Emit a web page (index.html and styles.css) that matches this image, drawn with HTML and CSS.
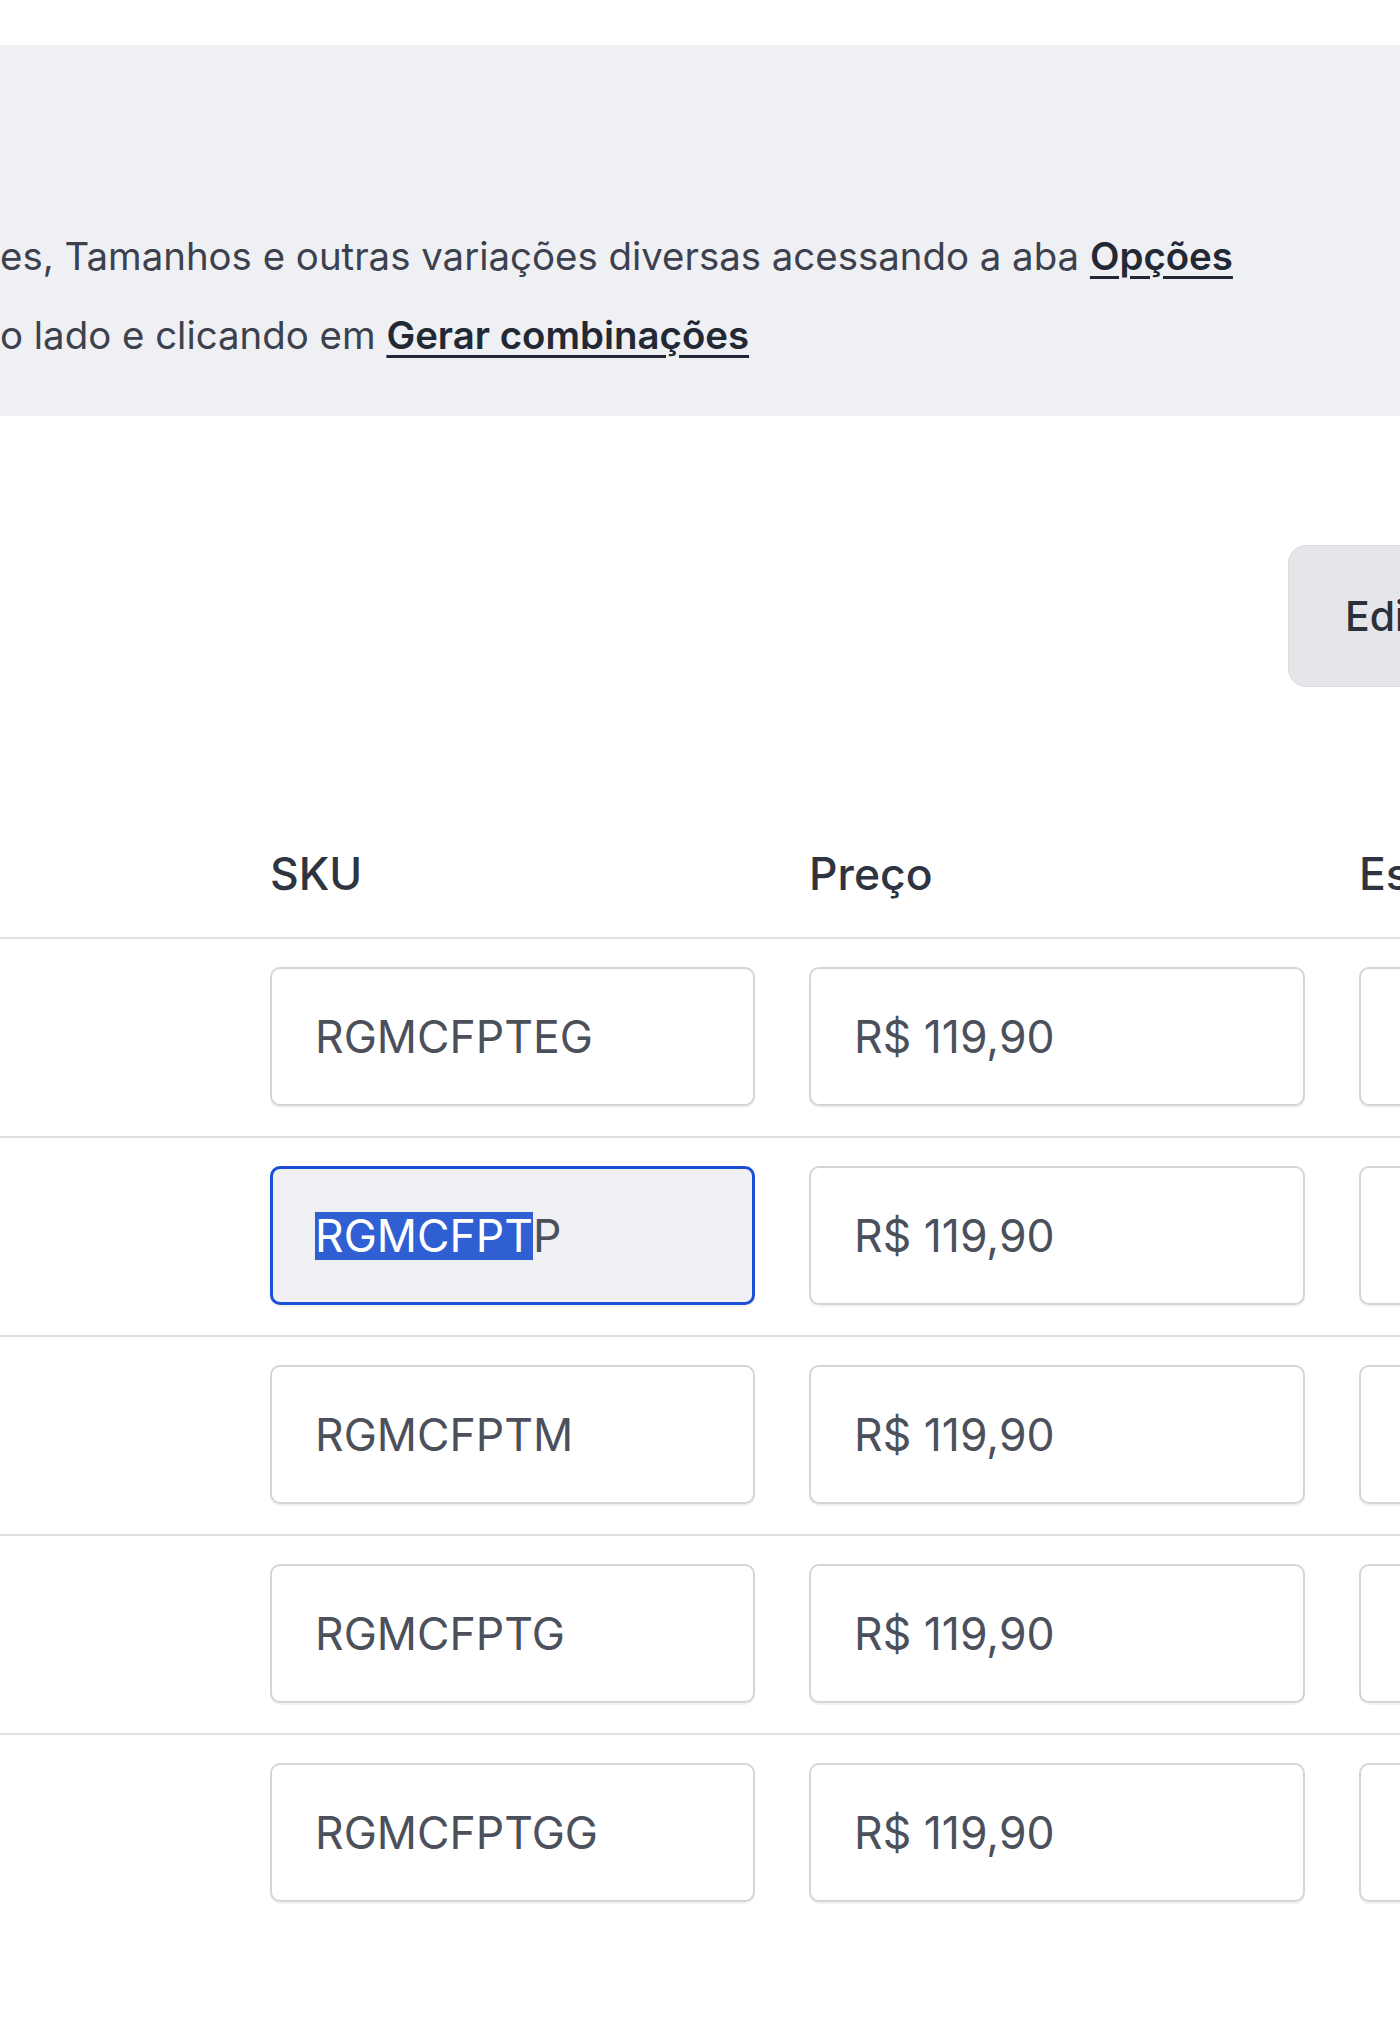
FILE: index.html
```html
<!DOCTYPE html>
<html lang="pt-BR">
<head>
<meta charset="utf-8">
<title>Variações</title>
<link rel="stylesheet" href="styles.css">
</head>
<body>
<div class="page">
  <section class="notice">
    <p class="notice-line">es, Tamanhos e outras variações diversas acessando a aba <a class="notice-link" href="#">Opções</a></p>
    <p class="notice-line">o lado e clicando em <a class="notice-link" href="#">Gerar combinações</a></p>
  </section>

  <div class="toolbar">
    <button class="btn" type="button">Editar em massa</button>
  </div>

  <div class="variants">
    <div class="row head">
      <div class="cell th">SKU</div>
      <div class="cell th">Preço</div>
      <div class="cell th">Estoque</div>
    </div>
    <div class="row">
      <div class="cell"><div class="field">RGMCFPTEG</div></div>
      <div class="cell"><div class="field">R$ 119,90</div></div>
      <div class="cell"><div class="field">10</div></div>
    </div>
    <div class="row">
      <div class="cell"><div class="field focused"><span class="sel">RGMCFPT</span>P</div></div>
      <div class="cell"><div class="field">R$ 119,90</div></div>
      <div class="cell"><div class="field">10</div></div>
    </div>
    <div class="row">
      <div class="cell"><div class="field">RGMCFPTM</div></div>
      <div class="cell"><div class="field">R$ 119,90</div></div>
      <div class="cell"><div class="field">10</div></div>
    </div>
    <div class="row">
      <div class="cell"><div class="field">RGMCFPTG</div></div>
      <div class="cell"><div class="field">R$ 119,90</div></div>
      <div class="cell"><div class="field">10</div></div>
    </div>
    <div class="row last">
      <div class="cell"><div class="field">RGMCFPTGG</div></div>
      <div class="cell"><div class="field">R$ 119,90</div></div>
      <div class="cell"><div class="field">10</div></div>
    </div>
  </div>
</div>
</body>
</html>
```

FILE: styles.css
```css
html, body {
  margin: 0;
  padding: 0;
  background: #ffffff;
  overflow: hidden;
}

body {
  font-family: "Inter", "Noto Sans", "Liberation Sans", sans-serif;
  color: #2e3440;
}

.page {
  width: 1400px;
  height: 2027px;
  overflow: hidden;
  padding-top: 45px;
  box-sizing: border-box;
}

/* info banner */
.notice {
  background: #eff0f4;
  height: 371px;
  box-sizing: border-box;
  padding-top: 172px;
}

.notice-line {
  margin: 0;
  font-size: 38.4px;
  line-height: 79px;
  color: #3c414d;
  white-space: nowrap;
}

.notice-link {
  color: #232835;
  font-weight: 600;
  text-decoration: underline;
  text-decoration-thickness: 3px;
  text-underline-offset: 6px;
}

/* toolbar */
.toolbar {
  display: flex;
  padding-left: 1288px;
  margin-top: 129px;
}

.btn {
  flex-shrink: 0;
  height: 142px;
  padding: 0 56px;
  border: 1px solid #d9dbdf;
  border-radius: 18px;
  background: #e4e6ea;
  font-family: inherit;
  font-size: 41px;
  font-weight: 500;
  color: #2b303b;
  white-space: nowrap;
}

/* variants table */
.row {
  display: grid;
  grid-template-columns: 485px 496px 496px;
  column-gap: 54px;
  padding-left: 270px;
  padding-top: 28px;
  padding-bottom: 30px;
  border-bottom: 2px solid #dfe0e3;
}

.row.last {
  border-bottom: none;
}

.row.head {
  padding-top: 163px;
  padding-bottom: 39px;
}

.th {
  font-size: 44.5px;
  line-height: 48px;
  font-weight: 500;
  color: #2e3440;
  white-space: nowrap;
}

.field {
  height: 139px;
  box-sizing: border-box;
  border: 2px solid #d3d5d9;
  border-radius: 10px;
  box-shadow: 0 2px 0 rgba(0, 0, 0, 0.05);
  background: #ffffff;
  display: flex;
  align-items: center;
  padding-left: 43px;
  font-size: 44.5px;
  line-height: 48px;
  color: #4b505b;
  white-space: nowrap;
}

.field.focused {
  border: 3px solid #1d4ed8;
  background: #eef0f4;
  padding-left: 42px;
}

.sel {
  background: #2f5fd3;
  color: #ffffff;
}
```
